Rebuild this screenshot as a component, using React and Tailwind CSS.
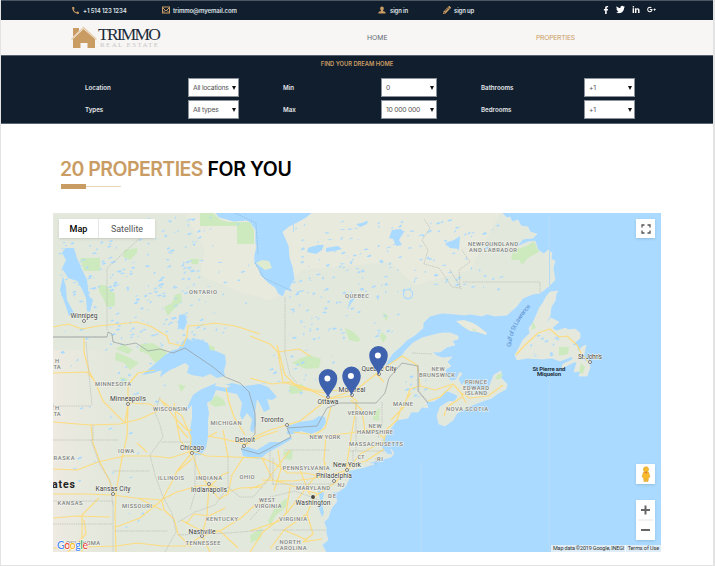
import React from "react";
import { FaFacebookF, FaTwitter, FaLinkedinIn, FaGooglePlusG, FaPencilAlt } from "react-icons/fa";
import { MdCall } from "react-icons/md";

const LAND =
  "M53 213H215L219 218L227 220L234 222L247 221L250 223L255 230L255 243L256 247L254 255L254 263L258 269L260 275L268 283L275 288L278 294L283 297L286 290L292 292L290 287L295 279L293 267L290 258L289 246L283 232L289 227L297 223L306 218L312 213H502L507 218L510 217L512 222L518 220L521 226L528 227L530 232L537 234L533 238L523 239L516 247L528 242L535 241L538 250L544 254L548 250L552 253L551 259L555 261L553 268L555 280L549 286L540 293L533 294L523 298L516 307L507 315L495 316L487 314L482 316L470 314L465 315L455 314L442 313L430 316L423 323L423 328L415 335L407 340L400 347L393 353L388 360L384 368L390 365L400 358L406 350L413 343L422 338L433 335L442 333L450 333L458 336L458 339L452 341L455 345L447 347L440 352L432 352L437 356L443 358L452 357L447 362L451 366L446 369L445 374L451 381L456 380L460 372L462 374L458 379L462 386L465 388L472 391L480 394L487 392L490 385L494 375L501 371L501 378L507 384L506 389L497 394L492 398L483 401L470 406L463 410L457 413L453 420L445 426L439 424L437 416L440 407L448 402L455 401L458 396L455 394L445 390L442 396L434 401L426 402L428 408L422 407L418 412L411 412L408 418L397 420L391 428L387 434L382 440L382 448L387 454L393 455L391 449L394 453L391 457L380 460L367 463L374 464L365 467L348 471L350 477L345 487L338 492L332 492L337 501L331 509L328 518L324 522L326 528L326 533L328 540L322 545L326 552H53Z";

const NEWFOUNDLAND =
  "M558 291L550 292L546 297L543 303L540 307L536 316L533 323L529 328L530 333L523 340L520 346L515 355L517 360L527 358L542 359L552 358L560 361L568 358L573 356L572 360L563 364L562 368L574 362L577 362L574 372L581 371L579 376L587 376L590 367L589 362L582 360L584 354L586 345L582 347L578 352L577 346L572 345L580 338L580 333L575 329L568 330L566 328L556 331L552 328L559 322L551 318L545 325L550 316L551 307L555 301L556 294Z";

const LAKES = [
  "M142 375L150 368L157 362L165 355L173 350L178 349L183 341L187 338L192 341L198 339L208 343L210 350L216 351L225 355L226 363L224 371L225 376L217 378L210 374L203 377L192 375L187 373L189 366L185 363L177 367L170 370L160 377L162 370L153 373Z",
  "M193 395L200 390L207 387L216 383L224 385L232 383L245 386L260 384L268 387L277 397L272 400L267 399L270 409L264 412L260 404L257 399L255 412L256 424L253 433L250 430L252 419L247 413L242 420L240 415L242 403L237 394L227 392L216 390L212 400L207 403L209 413L208 420L208 437L206 448L201 455L195 455L190 444L190 430L192 418L192 405L185 413L190 401Z",
  "M243 456L241 449L248 447L257 450L270 442L280 442L290 437L292 439L280 446L267 453L260 459L252 458Z",
  "M287 434L288 426L300 422L313 420L319 416L325 417L326 423L321 430L311 434L301 431L293 434Z",
  "M62 253L65 248L74 248L77 258L79 263L87 280L89 296L93 300L90 312L87 311L86 298L82 289L77 281L68 278L62 268L66 260Z",
  "M63 276L66 287L67 300L74 313L69 316L64 301L60 290Z",
  "M179 315L185 314L187 322L184 330L178 328Z",
  "M308 248L318 245L324 245L322 250L316 254L307 252Z",
  "M326 248L338 246L342 249L334 251L326 252Z",
  "M356 224L362 223L367 221L367 224L360 227Z",
  "M392 230L401 229L404 232L399 240L402 245L396 246L393 239L389 238Z",
  "M445 243L454 240L460 236L459 249L450 248Z",
  "M347 310L350 300L356 297L352 302Z",
  "M318 490L324 493L322 503L324 513L322 517L318 506L320 499Z",
];

const PARKS = [
  "M200 213H213L221 220L229 222H250L254 230V244H237V226H200Z",
  "M124 250L137 248L137 253L130 260L123 257Z",
  "M80 258H100V271H84Z",
  "M99 285L105 285L115 294L115 306L107 307L103 298L99 291Z",
  "M190 259L199 259L198 264L192 264Z",
  "M164 307L172 303L175 295L181 293L182 301L174 309L168 316Z",
  "M123 344L133 350L128 354L116 349Z",
  "M141 344L153 343L167 352L165 359L155 363L148 354L139 351Z",
  "M116 352L128 357L139 363L130 370L124 363L115 360Z",
  "M209 345L215 347L214 354L208 352Z",
  "M345 328L354 332L361 340L357 342L349 340Z",
  "M382 332L387 337L383 343L380 336Z",
  "M301 358L310 355L321 359L319 368L306 369L292 363Z",
  "M513 250L527 246L534 241L539 252L528 258L522 265L519 260L511 260Z",
  "M533 321L536 328L531 330Z",
  "M559 347L569 347L568 354L559 356Z",
  "M581 363L585 367L583 374L579 372Z",
  "M472 329L477 329L474 331Z",
  "M498 374L503 374L500 379L495 379Z",
  "M289 386L303 384L302 393L290 394Z",
  "M216 395L223 399L226 405L215 407L209 403Z",
  "M268 521L276 506L287 498L286 507L276 515L270 526Z",
  "M283 452L293 450L292 460L285 459Z",
  "M250 535L262 528L261 538L251 543Z",
  "M373 412L380 408L379 421L373 420Z",
  "M120 377L128 379L123 386Z",
  "M178 384L186 386L181 392Z",
  "M383 312L388 316L386 322Z",
];

const ROADS = [
  "M53 327L68 324L82 329L98 326L120 324L137 322L150 326L167 336L169 343L183 346L187 336L188 326L202 325L215 323L235 326L260 334",
  "M84 338L84 352L89 371L96 384L103 401L125 423L128 404L128 385L138 373L155 370",
  "M53 373L87 372L94 380",
  "M53 422L90 425L120 424L140 419L160 410L150 404L128 403",
  "M128 404L127 436L121 463L116 493L115 515L116 552",
  "M53 469L77 470L98 462L124 456L152 456L170 458L192 451L207 456L233 457L262 458",
  "M91 425L93 443L100 462L109 480L114 493",
  "M53 494L85 494L113 495L135 498L161 500L177 492L198 486L210 485L227 492L240 488L263 487",
  "M82 552L82 515L99 498",
  "M116 527L140 518L162 500L174 478L177 471L190 455L191 437L182 416L159 399",
  "M162 501L164 510L174 519L178 534L191 547",
  "M53 548L82 547L117 546L137 543L163 546L186 546L202 536L220 531L241 518L253 507L263 501",
  "M192 454L200 475L209 486L219 499L228 494L232 475L243 458",
  "M209 485L207 515L202 536L210 552",
  "M192 430L187 430L175 418L160 399",
  "M208 436L224 439L245 444L254 437L270 430L287 425L300 421L328 399L357 389L376 374L384 368L402 356",
  "M226 388L229 402L234 417L245 435",
  "M245 445L262 436L278 431",
  "M262 458L274 463L288 473L305 473L324 477L348 470L360 454L384 441L386 430L397 420L402 406L411 393",
  "M293 432L324 436L350 433L373 429L384 438",
  "M328 399L350 396L357 401L354 420L349 450L346 470L336 482L314 497L307 514L284 530L270 549",
  "M326 435L324 460L326 477M278 450L281 469L274 491M262 480L293 481L324 477",
  "M250 489L265 483L278 466L290 450M262 458L273 480L293 486L318 494",
  "M250 552L263 532L286 514L307 487L326 463",
  "M307 514L313 534L303 542L322 539M284 530L307 540M250 531L282 520",
  "M250 336L270 344L278 352L299 349L310 356M278 352L283 382L310 390L328 399",
  "M250 378L272 384L289 382L313 390L350 391M277 345L285 375L300 389L325 393",
  "M376 374L384 382M402 356L417 365L420 386L435 390L453 384L461 393L470 398L488 396L503 385M420 386L410 389L404 407L391 420M428 401L440 397L452 386M462 397L447 407L444 416M461 393L466 403",
  "M516 355L525 345L538 333L550 329L559 337L567 336L577 345L582 355L589 362M480 316",
  "M176 420L180 440L190 453M178 471L192 459M174 403L177 425L188 438",
  "M137 443L147 452M217 432L208 437M223 430L228 457M210 486L222 475L229 472M186 524L194 514L209 516L225 508",
  "M53 518L78 516L110 517M68 552L86 534L84 520M140 499L162 510M181 520L198 529L220 531L238 548",
  "M331 407L325 428L310 438M351 400L362 410L365 432M345 466L366 461L384 449M300 470L310 495M290 487L286 514",
];

const STATE_LINES = [
  "M107 330V268L151 228M84 213M53 337H107",
  "M86 342L90 385L92 405M53 406H91M53 404V410M91 440H118M93 425V440M53 440H91M91 440L100 465L110 480L113 505M53 501H113V552M113 471H150M53 524H112",
  "M160 397L155 412L160 425L163 437L150 455L155 475L163 497L172 513L176 532L165 552M161 442H190M195 455V493L190 510M228 457V487L215 505L195 512L178 522M115 531H168M178 535L228 533L265 530M228 487L240 497L253 497L270 478V450",
  "M285 297V353L290 375L297 383M273 484H335M284 450H330M273 458V485M273 530H326M250 520L270 497L295 491L319 500",
  "M356 403V450M350 451H385M382 402V425L378 438M353 450V466M376 458V466",
  "M424 219L430 228L422 240L428 250L424 264L439 268L452 287L460 288L459 270L470 262L462 250M463 282H540V293",
  "M412 353L432 354M442 313M450 270L462 290M418 365L419 391L428 402",
];

const INTL = [
  "M53 337H107L108 332L112 334L113 342L125 345L136 343L148 351L160 349L173 353L185 348L213 367L225 377L240 383L249 392L255 413L255 434L241 449L259 454L291 437L287 428L317 426L327 408L340 403H376L385 393L389 378L402 363L418 366V391L428 403",
];

const LABELS = [
  ["ONTARIO", 203, 294, 28], ["QUEBEC", 357, 298, 24], ["NEWFOUNDLAND", 493, 246, 50],
  ["AND LABRADOR", 493, 252, 48], ["MINNESOTA", 113, 386, 36], ["WISCONSIN", 170, 411, 34],
  ["MICHIGAN", 226, 425, 31], ["IOWA", 126, 453, 16], ["ILLINOIS", 171, 480, 26],
  ["INDIANA", 209, 480, 26], ["OHIO", 247, 479, 15], ["MISSOURI", 137, 508, 30],
  ["KENTUCKY", 222, 521, 32], ["TENNESSEE", 203, 545, 35], ["OKLAHOMA", 83, 545, 34],
  ["KANSAS", 70, 505, 25], ["RASKA", 64, 460, 21], ["TA", 57, 416, 7], ["H", 57, 410, 4],
  ["TA", 57, 369, 7], ["H", 57, 363, 4], ["NEW YORK", 325, 439, 31],
  ["PENNSYLVANIA", 306, 470, 47], ["MARYLAND", 313, 490, 34], ["WEST", 267, 502, 16],
  ["VIRGINIA", 268, 508, 27], ["VIRGINIA", 293, 521, 28], ["NORTH", 290, 544, 21],
  ["CAROLINA", 291, 550, 31], ["VERMONT", 362, 415, 29], ["NEW", 375, 428, 13],
  ["HAMPSHIRE", 375, 434, 36], ["MASSACHUSETTS", 376, 446, 54], ["CT", 361, 459, 7],
  ["RI", 380, 461, 6], ["NJ", 341, 487, 7], ["DE", 332, 498, 8], ["MAINE", 403, 406, 20],
  ["NEW", 438, 371, 13], ["BRUNSWICK", 437, 377, 36], ["PRINCE", 476, 384, 22],
  ["EDWARD", 476, 390, 26], ["ISLAND", 476, 395, 22], ["NOVA SCOTIA", 467, 411, 42],
];

const CITIES = [
  ["Winnipeg", 84, 318, 27, 84, 321], ["Minneapolis", 128, 401, 36, 128, 404],
  ["Chicago", 192, 450, 24, 192, 453], ["Detroit", 245, 442, 20, 244, 446],
  ["Toronto", 272, 422, 23, 287, 425], ["Indianapolis", 209, 492, 36, 209, 484],
  ["Kansas City", 113, 491, 35, 113, 494], ["Nashville", 202, 534, 27, 202, 536],
  ["New York", 347, 467, 28, 347, 470], ["Philadelphia", 334, 478, 36, 334, 481],
  ["Ottawa", 328, 404, 21, 328, 397], ["Montreal", 352, 392, 27, 352, 395],
  ["Quebec City", 379, 371, 35, 379, 374], ["St. John's", 590, 359, 24, 590, 362],
];

// Clusters of small northern lakes: x, y, width, height, count.
const SCATTER = [
  [56, 218, 145, 75, 125], [108, 285, 95, 62, 85], [56, 285, 40, 60, 14],
  [292, 222, 135, 70, 90], [288, 290, 110, 50, 62], [425, 220, 80, 70, 45],
  [258, 350, 75, 48, 24], [395, 370, 30, 35, 10], [525, 335, 45, 22, 12],
  [60, 350, 110, 60, 20], [180, 215, 70, 120, 26], [70, 415, 110, 120, 14],
];

function random(seed) {
  let s = seed;
  return () => {
    s = (s * 16807) % 2147483647;
    return s / 2147483647;
  };
}

function ponds() {
  const r = random(4217);
  const out = [];
  SCATTER.forEach(([x, y, w, h, n]) => {
    for (let i = 0; i < n; i++) {
      const px = x + r() * w;
      const py = y + r() * h;
      const a = 0.9 + r() * 2.8;
      const b = 0.6 + r() * 1.2;
      const t = (r() - 0.7) * 2;
      out.push(`M${px.toFixed(1)} ${py.toFixed(1)}l${a.toFixed(1)} ${(t - b).toFixed(1)}l${(a * 0.5).toFixed(1)} ${b.toFixed(1)}l${(-a).toFixed(1)} ${(b * 0.8).toFixed(1)}z`);
    }
  });
  return out.join("");
}

function Pin({ x, y }) {
  return (
    <g transform={`translate(${x} ${y})`}>
      <path d="M0 0C-1.500-6-9.300-11-9.300-19.700A9.300 9.300 0 0 1 9.300-19.700C9.300-11 1.500-6 0 0Z" fill="#3f62ae" />
      <circle cx="-.6" cy="-19.500" r="3" fill="#fff" />
    </g>
  );
}

function MapCanvas() {
  return (
    <svg className="block h-[339px] w-[608px]" viewBox="53 213 608 339" fontFamily="Roboto, sans-serif">
      <rect x="53" y="213" width="608" height="339" fill="#aadaff" />
      <defs>
        <clipPath id="land"><path d={LAND} /></clipPath>
        <linearGradient id="plains" x1="0" x2="1" y1="0" y2="0">
          <stop offset="0" stopColor="#eeeae1" />
          <stop offset="1" stopColor="#e3e8dc" stopOpacity="0" />
        </linearGradient>
      </defs>
      <path d={LAND} fill="#e3e8dc" stroke="#ebeade" strokeWidth=".7" />
      <g clipPath="url(#land)">
        <path d="M185 213L205 250L200 275L240 292L270 300L285 293L300 270L390 262L415 285L470 270L500 213Z" fill="#e8eade" />
        <rect x="53" y="350" width="75" height="202" fill="url(#plains)" />
      </g>
      <path d={NEWFOUNDLAND} fill="#e5e9dd" stroke="#ebeade" strokeWidth=".7" />
      <path d="M456 321L464 320L473 323L478 326L487 333L486 335L477 332L470 331L462 326Z" fill="#e8eadd" />
      <path d="M463 382L467 388L476 389L485 389L479 391L469 391L462 387Z" fill="#e5e9dd" />
      <path d="M256 263L262 260L269 261L272 268L265 270Z" fill="#dfebcf" />
      <path d={PARKS.join("")} fill="#cdeabf" />
      <path d={LAKES.join("")} fill="#aadaff" />
      <path d={ponds()} fill="#aadaff" />
      <circle cx="408" cy="294" r="4.600" fill="none" stroke="#aadaff" strokeWidth="1.200" />
      <path d="M216 383L224 384L231 386L226 388L215 386Z" fill="#e3e8dc" />
      <path d={ROADS.join("")} fill="none" stroke="#fcdc80" strokeWidth="1.200" strokeLinejoin="round" />
      <path d={STATE_LINES.join("")} fill="none" stroke="#b9bdb8" strokeWidth=".7" strokeDasharray="1.5 .8" />
      <path d={INTL.join("")} fill="none" stroke="#949b9c" strokeWidth=".7" />
      <path d="M235 213L256 223L258 254M255 263L264 278L292 291" fill="none" stroke="#87aecd" strokeWidth=".6" strokeDasharray="1.5 1" />
      <path d="M293.500 213V232M421.500 460V552M549.500 213V290M549.500 380V552" stroke="#b5dbf6" strokeWidth="1" />
      {LABELS.map(([t, x, y, w], i) => (
        <text key={i} x={x} y={y} textAnchor="middle" textLength={w} fontSize="5.800" fontWeight="500" fill="#7d827f" stroke="#f4f5ef" strokeWidth="1" paintOrder="stroke">{t}</text>
      ))}
      {CITIES.map(([t, x, y, w, cx, cy]) => (
        <g key={t}>
          <circle cx={cx} cy={cy} r="1.500" fill="#fff" stroke="#616161" strokeWidth=".8" />
          <text x={x} y={y} textAnchor="middle" textLength={w} fontSize="6.700" fill="#3c3f41" stroke="#f4f5ef" strokeWidth=".9" paintOrder="stroke">{t}</text>
        </g>
      ))}
      <circle cx="313" cy="497" r="1.900" fill="#444" />
      <text x="313" y="505" textAnchor="middle" textLength="35" fontSize="6.700" fill="#3c3f41" stroke="#f4f5ef" strokeWidth=".9" paintOrder="stroke">Washington</text>
      <g fontSize="6" fontWeight="700" fill="#26343f" textAnchor="middle">
        <text x="549" y="371" textLength="33">St Pierre and</text>
        <text x="549" y="376" textLength="24">Miquelon</text>
      </g>
      <text x="52" y="488" fontSize="10.500" fontWeight="700" fill="#222" textLength="23">ates</text>
      <path id="gulf" d="M511 347Q512 326 533 304" fill="none" />
      <text fontSize="6.200" fill="#5c8fd0"><textPath href="#gulf" textLength="46">Gulf of St Lawrence</textPath></text>
      <Pin x={328} y={398} />
      <Pin x={351.5} y={395.500} />
      <Pin x={378.500} y={375} />
      <text x="57" y="549" fontSize="10.500" fontWeight="500" textLength="31" stroke="#fff" strokeWidth="1.200" paintOrder="stroke" fontFamily="Lato, sans-serif">
        <tspan fill="#4285f4">G</tspan><tspan fill="#ea4335">o</tspan><tspan fill="#fbbc05">o</tspan><tspan fill="#4285f4">g</tspan><tspan fill="#34a853">l</tspan><tspan fill="#ea4335">e</tspan>
      </text>
    </svg>
  );
}

function House() {
  return (
    <svg className="h-[23px] w-[26px] shrink-0" viewBox="0 0 26 23">
      <path d="M2 2H8V5L2 11Z" fill="#c99c64" />
      <path d="M2 13L12.500 3L24 13V22H16.500V17H9.500V22H2Z" fill="#c99c64" />
      <path d="M.5 13.500L12.500 1.500L25.500 13.500" fill="none" stroke="#e6cfb0" strokeWidth="1.500" />
    </svg>
  );
}

function TopBar() {
  return (
    <div className="flex h-5 items-center border-t border-[#4c5763] bg-[#111e2d] pb-px text-[6px] font-semibold text-[#dfe2e5]">
      <div className="flex w-[90px] items-center pl-[70px] whitespace-nowrap">
        <MdCall className="mr-[3px] size-[9px] shrink-0 text-[#c99c64]" />
        <span className="w-[45px] tracking-[-0.14px]">+1 514 123 1234</span>
      </div>
      <div className="ml-[71px] flex w-[216px] items-center whitespace-nowrap">
        <svg className="mr-[3px] size-[8px] shrink-0" viewBox="0 0 8 8" fill="none" stroke="#c99c64" strokeWidth="1">
          <rect x=".5" y="1" width="7" height="6" /><path d="M1 2L4 5L7 2M1 6.500L3 4.500M7 6.500L5 4.500" />
        </svg>
        <span className="tracking-[-0.08px]">trimmo@myemail.com</span>
      </div>
      <div className="flex w-[65px] items-center whitespace-nowrap">
        <svg className="mr-[4px] size-[8px]" viewBox="0 0 8 8" fill="#c99c64">
          <path d="M4 .5C5.300.5 6 1.500 5.800 2.700C5.700 3.700 5 4 5 5L7.500 6V7.500H.5V6L3 5C3 4 2.300 3.700 2.200 2.700C2 1.500 2.700.5 4 .5Z" />
        </svg>
        <span className="tracking-[-0.15px]">sign in</span>
      </div>
      <div className="flex w-[160px] items-center whitespace-nowrap">
        <FaPencilAlt className="mr-[3px] size-[8px] text-[#c99c64]" />
        <span className="tracking-[-0.15px]">sign up</span>
      </div>
      <div className="flex items-center gap-[7px] pb-[1px] text-white">
        <FaFacebookF className="h-[8px] w-[6px]" />
        <FaTwitter className="size-[9px]" />
        <FaLinkedinIn className="size-[8px]" />
        <FaGooglePlusG className="size-[9px]" />
      </div>
    </div>
  );
}

function Field({ label, value, wide }) {
  return (
    <div className="flex w-[198px] items-center">
      <span className={`${wide ? "w-[98px]" : "w-[103px]"} text-[6.200px] font-semibold text-[#e4e7ea]`}>{label}</span>
      <button className={`${wide ? "w-[56px]" : "w-[51px]"} flex h-[19px] items-center justify-between border border-[#8b9299] bg-white pt-px pr-[2px] pl-[4px] text-[6.800px] tracking-[-0.250px] whitespace-nowrap text-[#555]`}>
        <span>{value}</span>
        <svg className="h-[4px] w-[4px] shrink-0" viewBox="0 0 4 4"><path d="M0 0H4L2 4Z" fill="#111" /></svg>
      </button>
    </div>
  );
}

function Filters() {
  return (
    <div className="h-[69px] border-t border-b border-[#59636f] bg-[#111e2d]">
      <h2 className="pt-[3px] text-center text-[5.800px] leading-[10px] font-semibold tracking-[-0.03px] text-[#c99c64]">FIND YOUR DREAM HOME</h2>
      <div className="mt-[9px] flex flex-col gap-[3px] pl-[84px]">
        <div className="flex">
          <Field label="Location" value="All locations" />
          <Field label="Min" value="0" wide />
          <Field label="Bathrooms" value="+1" />
        </div>
        <div className="flex">
          <Field label="Types" value="All types" />
          <Field label="Max" value="10 000 000" wide />
          <Field label="Bedrooms" value="+1" />
        </div>
      </div>
    </div>
  );
}

function MapControls() {
  return (
    <div className="absolute inset-0 flex justify-between pt-[6px] pl-[6px] font-['Roboto',sans-serif]">
      <div className="flex h-[19px] bg-white text-[9px] leading-[20px] shadow-sm">
        <span className="w-[40px] border-r border-[#e6e6e6] text-center font-medium text-black">Map</span>
        <span className="w-[56px] text-center text-[#565656]">Satellite</span>
      </div>
      <div className="flex flex-col items-end">
        <div className="mr-[6px] flex size-[19px] items-center justify-center bg-white shadow-sm">
          <svg className="size-[10px]" viewBox="0 0 10 10" fill="none" stroke="#555" strokeWidth="1.300"><path d="M1 3.500V1H3.500M6.500 1H9V3.500M9 6.500V9H6.500M3.500 9H1V6.500" /></svg>
        </div>
        <div className="mt-[226px] mr-[6px] flex h-[20px] w-[19px] items-center justify-center bg-white shadow-sm">
          <svg className="h-[16px] w-[10px]" viewBox="0 0 10 16">
            <circle cx="5" cy="3.300" r="2.600" fill="#f9bb2d" stroke="#d59a27" strokeWidth=".5" />
            <path d="M2.500 6H7.500L9 11L7.500 11.500L7 15.500H5.400L5 12L4.600 15.500H3L2.500 11.500L1 11Z" fill="#f9bb2d" stroke="#d59a27" strokeWidth=".5" />
            <path d="M3.500 6H6.500L5 8Z" fill="#e5782d" />
          </svg>
        </div>
        <div className="mt-[16px] mr-[6px] flex h-[40px] w-[19px] flex-col items-center bg-white shadow-sm">
          <svg className="h-[40px] w-[19px]" viewBox="0 0 19 40"><path d="M5 10H14M9.500 5.500V14.500M5 30H14" stroke="#666" strokeWidth="2" /><path d="M2 20H17" stroke="#e6e6e6" /></svg>
        </div>
        <div className="mt-auto flex h-[7px] w-[110px] items-center justify-between bg-[#deedf7] px-[2px] text-[5.500px] leading-[7px] whitespace-nowrap text-[#333]">
          <span className="tracking-[-0.18px]">Map data ©2019 Google, INEGI</span>
          <span className="border-l border-white pl-[2px] tracking-[-0.1px]">Terms of Use</span>
        </div>
      </div>
    </div>
  );
}

export default function App() {
  return (
    <div className="h-[566px] w-[715px] overflow-hidden border-r-2 border-b border-l border-[#e3e3e3] bg-white font-['Inter','Open_Sans',sans-serif]">
      <TopBar />
      <nav className="flex h-[35px] items-center bg-[#f8f6f4] pl-[70px]">
        <div className="flex w-[296px]">
          <House />
          <div className="ml-[1px] font-['Liberation_Serif',serif]">
            <div className="text-[17.500px] leading-[16px] tracking-[-1.800px] text-[#1d2b3b]">TRIMMO</div>
            <div className="pl-[2px] text-[7px] leading-[7px] tracking-[1.350px] whitespace-nowrap text-[#c6c6c6]">REAL ESTATE</div>
          </div>
        </div>
        <a className="w-[169px] pt-px text-[6.800px] text-[#606872]">HOME</a>
        <a className="pt-px text-[6.800px] tracking-[-0.250px] text-[#c99c64]">PROPERTIES</a>
      </nav>
      <Filters />
      <main className="pl-[52px]">
        <h1 className="pt-[33px] pl-[7px] text-[19.500px] leading-[24px] font-semibold tracking-[-0.380px] whitespace-nowrap text-black">
          <span className="tracking-[-0.550px] text-[#c99c64]">20 PROPERTIES</span> FOR YOU
        </h1>
        <div className="mt-[3px] ml-[8px] flex h-[5px] w-[60px] items-center">
          <div className="h-[5px] w-[25px] bg-[#c99c64]" />
          <div className="h-px grow bg-[#ead4b8]" />
        </div>
        <div className="relative mt-[24px] h-[339px] w-[608px]">
          <MapCanvas />
          <MapControls />
        </div>
      </main>
    </div>
  );
}
